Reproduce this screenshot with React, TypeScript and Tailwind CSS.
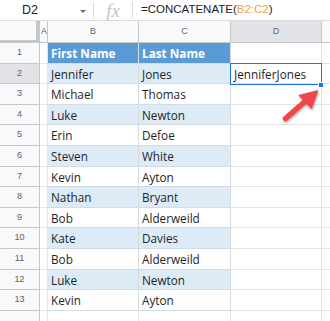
import React from "react";

const rows: [string, string][] = [
  ["Jennifer", "Jones"],
  ["Michael", "Thomas"],
  ["Luke", "Newton"],
  ["Erin", "Defoe"],
  ["Steven", "White"],
  ["Kevin", "Ayton"],
  ["Nathan", "Bryant"],
  ["Bob", "Alderweild"],
  ["Kate", "Davies"],
  ["Bob", "Alderweild"],
  ["Luke", "Newton"],
  ["Kevin", "Ayton"],
];

const hdrFont = { fontFamily: '"Liberation Sans", Arial, sans-serif' };
const cellFont = { fontFamily: '"Open Sans", sans-serif' };

function RowNum({ n, active }: { n: string; active?: boolean }) {
  return (
    <div
      className={`flex items-center justify-center border-r border-b border-[#c4c7c5] text-[9px] text-[#5f6368] ${active ? "bg-[#e1e3e6]" : "bg-[#f8f9fa]"}`}
      style={hdrFont}
    >
      {n}
    </div>
  );
}

function Cell({ text, blue, bold, head }: { text?: string; blue?: boolean; bold?: boolean; head?: boolean }) {
  const bg = head ? "bg-[#5b9bd5] text-white" : blue ? "bg-[#ddebf7] text-[#1f1f1f]" : "bg-white text-[#1f1f1f]";
  const border = "border-[#d3dbe3]";
  return (
    <div
      className={`flex items-center pl-[3px] pt-[2px] border-r border-b ${border} ${bg} text-[11.75px] whitespace-nowrap overflow-hidden ${bold ? "font-bold" : ""}`}
      style={cellFont}
    >
      {text}
    </div>
  );
}

function Blank() {
  return <div className="border-r border-b border-[#e2e3e3] bg-white" />;
}

export default function App() {
  return (
    <div className="relative w-[330px] h-[321px] overflow-hidden bg-white">
      {/* formula bar */}
      <div className="flex items-center h-[21px] border-b border-[#dadce0] text-[#202124]" style={hdrFont}>
        <div className="w-[93px] flex items-center h-full relative">
          <span className="ml-[22px] text-[12.5px]">D2</span>
          <svg className="absolute left-[80px] top-[10px]" width="6" height="3" viewBox="0 0 6 3">
            <path d="M0 0 L6 0 L3 3 Z" fill="#6f6f6f" />
          </svg>
        </div>
        <div className="w-px h-[16px] bg-[#dadce0]" />
        <div className="w-[38px] flex items-center justify-center h-full">
          <span
            className="italic text-[#c6c6c6] text-[19px] leading-none"
            style={{ fontFamily: '"Liberation Serif", "Times New Roman", serif' }}
          >
            fx
          </span>
        </div>
        <div className="w-px h-[16px] bg-[#dadce0]" />
        <div className="ml-[8px] text-[11.5px] whitespace-nowrap">
          =CONCATENATE(<span className="text-[#f29d4b]">B2:C2</span>)
        </div>
      </div>

      {/* grid */}
      <div
        className="grid"
        style={{
          gridTemplateColumns: "40px 8px 91px 92px 91px 20px",
          gridTemplateRows: "22px repeat(14, 20.6px)",
        }}
      >
        {/* header row */}
        <div className="bg-[#f8f9fa] border-r-[4px] border-b-[3px] border-[#c4c7c5]" />
        <div className="flex items-center bg-[#f8f9fa] border-r border-b border-[#c4c7c5] text-[9px] text-[#5f6368] overflow-hidden pl-[1px]" style={hdrFont}>A</div>
        <div className="flex items-center justify-center bg-[#f8f9fa] border-r border-b border-[#c4c7c5] text-[9px] text-[#5f6368]" style={hdrFont}>B</div>
        <div className="flex items-center justify-center bg-[#f8f9fa] border-r border-b border-[#c4c7c5] text-[9px] text-[#5f6368]" style={hdrFont}>C</div>
        <div className="flex items-center justify-center bg-[#e1e3e6] border-r border-b border-[#c4c7c5] text-[9px] text-[#5f6368]" style={hdrFont}>D</div>
        <div className="bg-[#f8f9fa] border-b border-[#c4c7c5]" />

        {/* row 1 */}
        <RowNum n="1" />
        <Blank />
        <Cell text="First Name" head bold />
        <Cell text="Last Name" head bold />
        <Blank />
        <div className="border-b border-[#e2e3e3]" />

        {rows.map(([a, b], i) => {
          const n = i + 2;
          const blue = n % 2 === 0;
          return (
            <React.Fragment key={n}>
              <RowNum n={String(n)} active={n === 2} />
              <Blank />
              <Cell text={a} blue={blue} />
              <Cell text={b} blue={blue} />
              {n === 2 ? (
                <div className="flex items-center pl-[3px] pt-[2px] border-r border-b border-[#e2e3e3] text-[11.75px] text-[#1f1f1f] whitespace-nowrap" style={cellFont}>
                  JenniferJones
                </div>
              ) : (
                <Blank />
              )}
              <div className="border-b border-[#e2e3e3]" />
            </React.Fragment>
          );
        })}

        {/* row 14 partial */}
        <RowNum n="" />
        <Blank />
        <Blank />
        <Blank />
        <Blank />
        <div />
      </div>

      {/* selection */}
      <div className="absolute left-[230px] top-[63px] w-[92px] h-[22px] border-[1.5px] border-[#1a73e8] pointer-events-none" />
      <div className="absolute left-[318px] top-[82px] w-[6px] h-[6px] bg-[#1a73e8] border border-white" />

      {/* arrow */}
      <svg className="absolute left-0 top-0 pointer-events-none" width="330" height="321" viewBox="0 0 330 321">
        <defs>
          <filter id="sh" x="-50%" y="-50%" width="200%" height="200%">
            <feDropShadow dx="0.5" dy="1.5" stdDeviation="1.2" floodColor="#000" floodOpacity="0.35" />
          </filter>
        </defs>
        <g filter="url(#sh)">
          <line x1="285.5" y1="118.5" x2="305" y2="101.5" stroke="#f0454a" strokeWidth="5.5" strokeLinecap="round" />
          <path d="M317.5 91 L311.5 108 L299.5 95.5 Z" fill="#f0454a" stroke="#f0454a" strokeWidth="1.5" strokeLinejoin="round" />
        </g>
      </svg>
    </div>
  );
}
